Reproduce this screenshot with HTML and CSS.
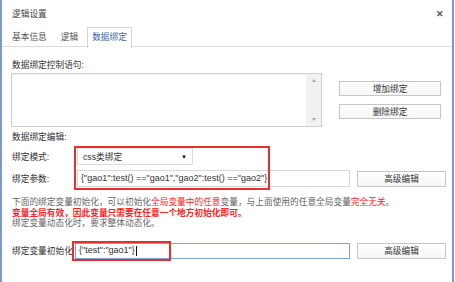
FILE: index.html
```html
<!DOCTYPE html>
<html lang="zh">
<head>
    <meta charset="UTF-8">
    <title>逻辑设置</title>
    <link rel="stylesheet" href="styles.css">
</head>
<body>

<div class="dialog">
    <div class="titlebar">
        <span class="title">逻辑设置</span>
        <span class="close">&#x2715;</span>
    </div>

    <div class="tabs">
        <span class="tab">基本信息</span>
        <span class="tab">逻辑</span>
        <span class="tab active">数据绑定</span>
    </div>

    <div class="body">
        <div class="sec-label">数据绑定控制语句:</div>
        <div class="ctrl-row">
            <div class="textarea">
                <div class="scrollbar">
                    <span class="arrow-up"></span>
                    <span class="arrow-down"></span>
                </div>
            </div>
            <div class="ctrl-buttons">
                <button class="btn wide">增加绑定</button>
                <button class="btn wide">删除绑定</button>
            </div>
        </div>

        <div class="sec-label edit-label">数据绑定编辑:</div>

        <div class="bind-fields">
            <div class="row">
                <label class="row-label">绑定模式:</label>
                <div class="select">
                    <span>css类绑定</span>
                    <span class="caret-down">&#9660;</span>
                </div>
            </div>
            <div class="row params">
                <label class="row-label">绑定参数:</label>
                <div class="field">{"gao1":test() =="gao1","gao2":test() =="gao2"}</div>
                <button class="btn adv">高级编辑</button>
            </div>
            <div class="mark mark-mode"></div>
        </div>

        <div class="desc">
            <div>下面的绑定变量初始化，可以初始化<span class="red">全局变量中的任意</span>变量，与上面使用的任意全局变量<span class="red">完全无关</span>。</div>
            <div class="red strong">变量全局有效，因此变量只需要在任意一个地方初始化即可。</div>
            <div>绑定变量动态化时，要求整体动态化。</div>
        </div>

        <div class="row init">
            <label class="row-label">绑定变量初始化</label>
            <div class="field focus">{"test":"gao1"}<span class="cursor"></span></div>
            <button class="btn adv">高级编辑</button>
            <div class="mark mark-init"></div>
        </div>
    </div>
</div>

</body>
</html>
```

FILE: styles.css
```css
body {
    margin: 0;
    font-family: "Liberation Sans", "Noto Sans CJK SC", sans-serif;
    font-size: 8.7px;
    color: #333;
    background-color: #fff;
}
.dialog {
    width: 454px;
    height: 282px;
    box-sizing: border-box;
    border-left: 2px solid #7d97c8;
    border-right: 2px solid #7d97c8;
    background-color: #fff;
    overflow: hidden;
}
.titlebar {
    height: 27px;
    display: flex;
    align-items: center;
    justify-content: space-between;
    padding: 0 8px 0 10px;
    color: #444;
}
.close {
    font-size: 9px;
    font-weight: bold;
    color: #555;
}
.tabs {
    display: flex;
    gap: 4px;
    height: 19px;
    padding-left: 5px;
    border-bottom: 1px solid #dcdcdc;
}
.tab {
    padding: 0 4px;
    line-height: 19px;
    border: 1px solid transparent;
    border-bottom: none;
    color: #555;
}
.tab.active {
    border-color: #d4d4d4;
    background-color: #fff;
    color: #3a68ad;
    height: 20px;
}
.body {
    padding: 12px 6px 0 10px;
}
.sec-label {
    line-height: 12px;
    color: #333;
}
.ctrl-row {
    display: flex;
    margin-top: 2px;
}
.textarea {
    width: 311px;
    height: 54px;
    margin-left: -1px;
    box-sizing: border-box;
    border: 1px solid #cfcfcf;
    box-shadow: inset 0 1px 1px rgba(0, 0, 0, 0.06);
    display: flex;
    justify-content: flex-end;
}
.scrollbar {
    width: 15px;
    background-color: #f1f1f1;
    display: flex;
    flex-direction: column;
    justify-content: space-between;
    align-items: center;
    padding: 5px 0;
}
.arrow-up, .arrow-down {
    width: 0;
    height: 0;
    border-left: 2.5px solid transparent;
    border-right: 2.5px solid transparent;
}
.arrow-up {
    border-bottom: 3px solid #a8a8a8;
}
.arrow-down {
    border-top: 3px solid #a8a8a8;
}
.ctrl-buttons {
    display: flex;
    flex-direction: column;
    gap: 8px;
    margin-left: 17px;
    padding-top: 8px;
}
.btn {
    font-family: inherit;
    font-size: 8.7px;
    color: #333;
    background: linear-gradient(#fff, #f6f6f6);
    border: 1px solid #c6c6c6;
    padding: 0;
    cursor: pointer;
}
.btn.wide {
    width: 102px;
    height: 15px;
}
.btn.adv {
    width: 89px;
    height: 16px;
    margin-left: 7px;
}
.edit-label {
    margin-top: 4px;
}
.bind-fields {
    position: relative;
    margin-top: 5px;
}
.row {
    display: flex;
    align-items: center;
}
.row-label {
    width: 65px;
    flex-shrink: 0;
}
.select {
    width: 116px;
    height: 17px;
    box-sizing: border-box;
    border: 1px solid #dcdcdc;
    display: flex;
    align-items: center;
    justify-content: space-between;
    padding: 0 5px 0 5px;
}
.caret-down {
    font-size: 6px;
    color: #111;
}
.params {
    margin-top: 5px;
}
.field {
    width: 273px;
    height: 17px;
    box-sizing: border-box;
    border: 1px solid #d8d8d8;
    padding-left: 3px;
    line-height: 15px;
    white-space: nowrap;
    overflow: hidden;
    font-size: 9px;
    color: #333;
    display: flex;
    align-items: center;
}
.field.focus {
    border-color: #7ea2d8;
    margin-left: -2px;
    width: 275px;
}
.cursor {
    width: 1px;
    height: 10px;
    background-color: #111;
    margin-left: 1px;
}
.mark {
    position: absolute;
    box-sizing: border-box;
    border: 2px solid #e6302d;
}
.mark-mode {
    left: 62px;
    top: -2px;
    width: 196px;
    height: 44px;
}
.desc {
    margin-top: 10px;
    line-height: 10.5px;
    color: #666;
}
.red {
    color: #ff2424;
}
.strong {
    font-weight: bold;
}
.init {
    position: relative;
    margin-top: 14px;
}
.init .field {
    height: 16px;
}
.mark-init {
    left: 60px;
    top: -2px;
    width: 99px;
    height: 20px;
}
```
